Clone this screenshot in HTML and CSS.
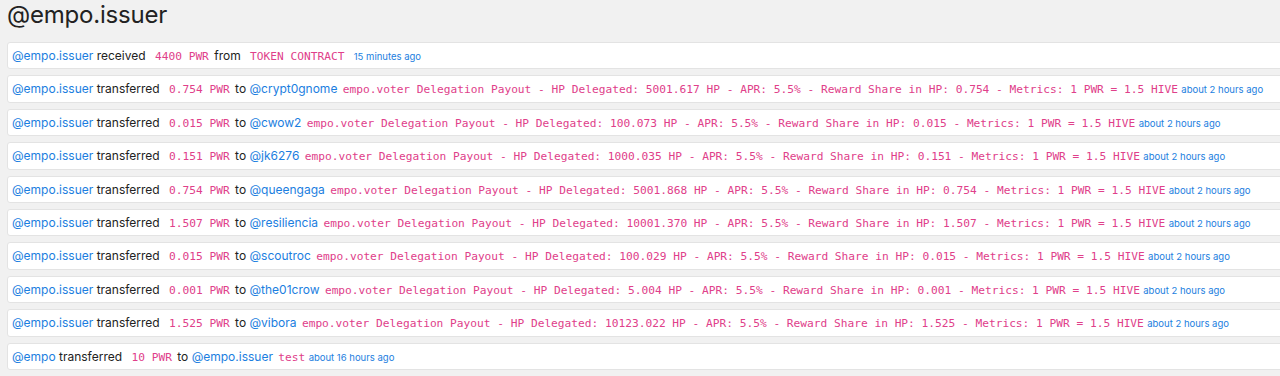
FILE: index.html
```html
<!DOCTYPE html>
<html>
<head>
<meta charset="utf-8">
<link rel="stylesheet" href="styles.css">
</head>
<body>
<h1 class="title">@empo.issuer</h1>
<div class="list">
  <div class="item"><a class="user">@empo.issuer</a> received <code class="amt">4400 PWR</code> from <code class="amt src">TOKEN CONTRACT</code> <span class="time">15 minutes ago</span></div>
  <div class="item"><a class="user">@empo.issuer</a> transferred <code class="amt">0.754 PWR</code> to <a class="user">@crypt0gnome</a> <code class="memo">empo.voter Delegation Payout - HP Delegated: 5001.617 HP - APR: 5.5% - Reward Share in HP: 0.754 - Metrics: 1 PWR = 1.5 HIVE</code> <span class="time">about 2 hours ago</span></div>
  <div class="item"><a class="user">@empo.issuer</a> transferred <code class="amt">0.015 PWR</code> to <a class="user">@cwow2</a> <code class="memo">empo.voter Delegation Payout - HP Delegated: 100.073 HP - APR: 5.5% - Reward Share in HP: 0.015 - Metrics: 1 PWR = 1.5 HIVE</code> <span class="time">about 2 hours ago</span></div>
  <div class="item"><a class="user">@empo.issuer</a> transferred <code class="amt">0.151 PWR</code> to <a class="user">@jk6276</a> <code class="memo">empo.voter Delegation Payout - HP Delegated: 1000.035 HP - APR: 5.5% - Reward Share in HP: 0.151 - Metrics: 1 PWR = 1.5 HIVE</code> <span class="time">about 2 hours ago</span></div>
  <div class="item"><a class="user">@empo.issuer</a> transferred <code class="amt">0.754 PWR</code> to <a class="user">@queengaga</a> <code class="memo">empo.voter Delegation Payout - HP Delegated: 5001.868 HP - APR: 5.5% - Reward Share in HP: 0.754 - Metrics: 1 PWR = 1.5 HIVE</code> <span class="time">about 2 hours ago</span></div>
  <div class="item"><a class="user">@empo.issuer</a> transferred <code class="amt">1.507 PWR</code> to <a class="user">@resiliencia</a> <code class="memo">empo.voter Delegation Payout - HP Delegated: 10001.370 HP - APR: 5.5% - Reward Share in HP: 1.507 - Metrics: 1 PWR = 1.5 HIVE</code> <span class="time">about 2 hours ago</span></div>
  <div class="item"><a class="user">@empo.issuer</a> transferred <code class="amt">0.015 PWR</code> to <a class="user">@scoutroc</a> <code class="memo">empo.voter Delegation Payout - HP Delegated: 100.029 HP - APR: 5.5% - Reward Share in HP: 0.015 - Metrics: 1 PWR = 1.5 HIVE</code> <span class="time">about 2 hours ago</span></div>
  <div class="item"><a class="user">@empo.issuer</a> transferred <code class="amt">0.001 PWR</code> to <a class="user">@the01crow</a> <code class="memo">empo.voter Delegation Payout - HP Delegated: 5.004 HP - APR: 5.5% - Reward Share in HP: 0.001 - Metrics: 1 PWR = 1.5 HIVE</code> <span class="time">about 2 hours ago</span></div>
  <div class="item"><a class="user">@empo.issuer</a> transferred <code class="amt">1.525 PWR</code> to <a class="user">@vibora</a> <code class="memo">empo.voter Delegation Payout - HP Delegated: 10123.022 HP - APR: 5.5% - Reward Share in HP: 1.525 - Metrics: 1 PWR = 1.5 HIVE</code> <span class="time">about 2 hours ago</span></div>
  <div class="item"><a class="user">@empo</a> transferred <code class="amt">10 PWR</code> to <a class="user">@empo.issuer</a> <code class="memo">test</code> <span class="time">about 16 hours ago</span></div>
</div>
</body>
</html>
```
FILE: styles.css
```css
html, body {
  margin: 0;
  padding: 0;
  background: #f1f1f1;
}
body {
  padding: 0 0 0 7px;
  font-family: Inter, "Liberation Sans", sans-serif;
  color: #222;
  overflow: hidden;
}
.title {
  margin: 0;
  padding-top: 0;
  height: 42px;
  font-size: 24px;
  font-weight: 400;
  line-height: 29px;
  letter-spacing: -0.2px;
}
.list {
  display: flex;
  flex-direction: column;
  gap: 6px;
  width: 1290px;
}
.item {
  background: #fff;
  border: 1px solid #e3e3e3;
  border-radius: 3px;
  height: 25.4px;
  line-height: 25.4px;
  padding: 0 4px;
  white-space: nowrap;
  overflow: hidden;
  font-size: 12px;
}
.user {
  color: #1b7ee0;
  text-decoration: none;
}
code {
  font-family: "DejaVu Sans Mono", "Liberation Mono", monospace;
  color: #e0408a;
  font-size: 11.2px;
  line-height: 1;
}
.amt {
  margin: 0 2px 0 6px;
}
.src {
  margin-right: 6px;
}
.memo {
  margin-left: 2px;
}
.time {
  color: #1b7ee0;
  font-size: 9.5px;
  line-height: 1;
}
```
